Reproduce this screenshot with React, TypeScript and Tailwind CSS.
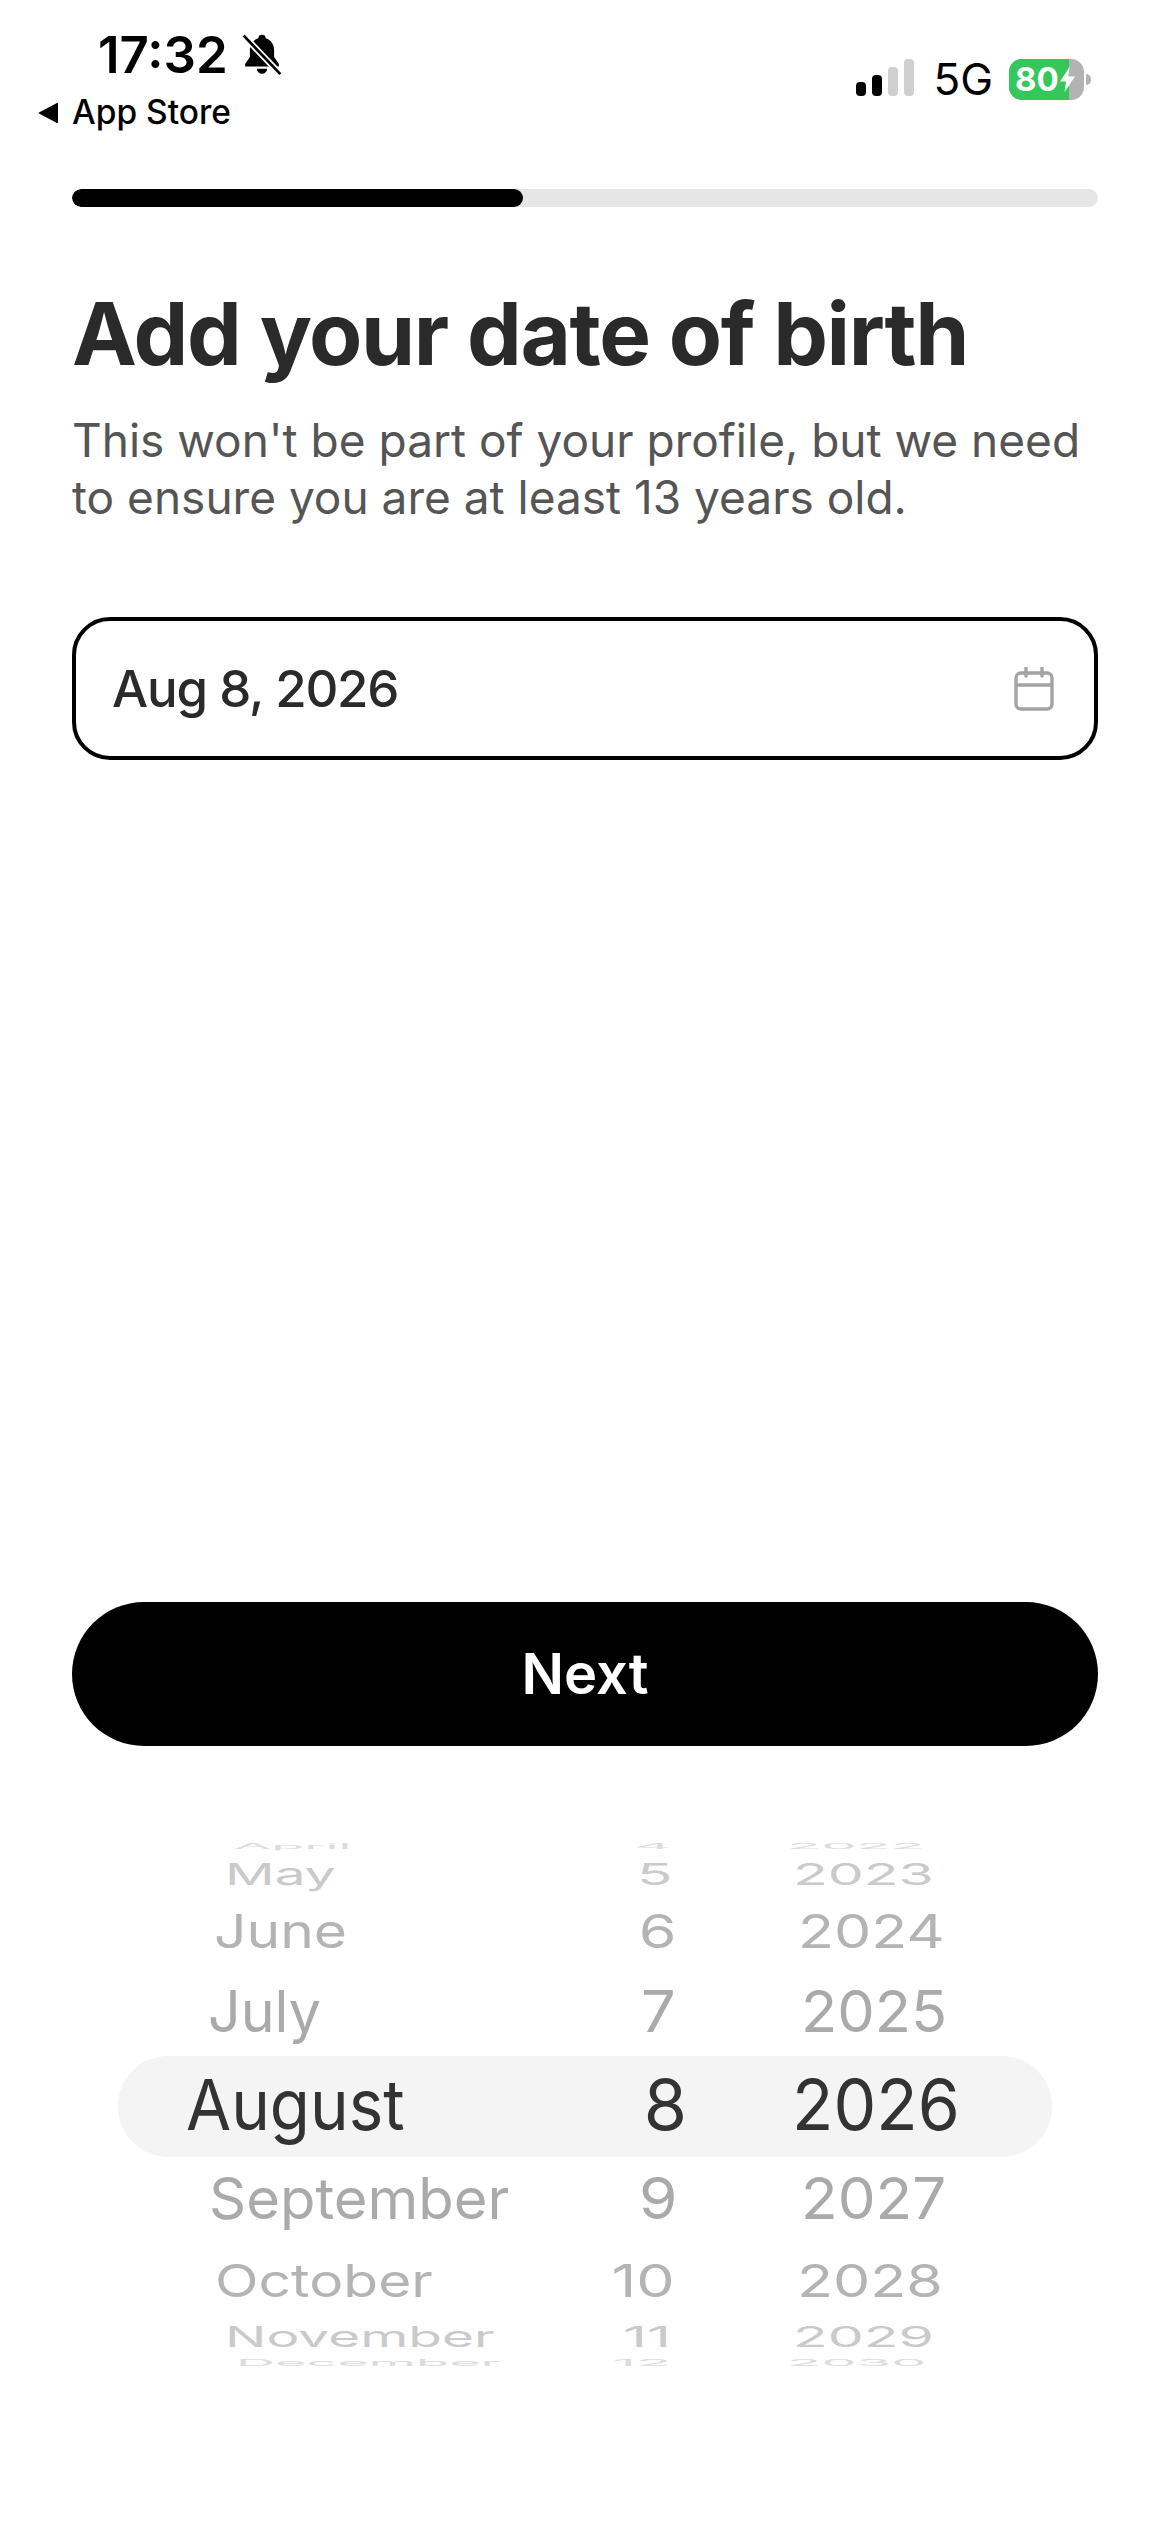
const ROWS = [
  { month: "April", day: "4", year: "2022", row: "h-[14px] text-[#dcdcdc]", tf: "[transform:scale(0.825,0.1)]", mc: "pl-[116px]", dc: "pr-[17px]", yc: "pl-[99px]" },
  { month: "May", day: "5", year: "2023", row: "h-[43px] text-[#cacaca]", tf: "[transform:scale(0.84,0.43)]", mc: "pl-[107px]", dc: "pr-[15px]", yc: "pl-[105px]" },
  { month: "June", day: "6", year: "2024", row: "h-[71px] text-[#b4b4b4]", tf: "[transform:scale(0.87,0.67)]", mc: "pl-[96px]", dc: "pr-[12px]", yc: "pl-[110px]" },
  { month: "July", day: "7", year: "2025", row: "h-[88px] text-[#aaaaaa]", tf: "[transform:scale(0.875,0.82)]", mc: "pl-[90px]", dc: "pr-[12px]", yc: "pl-[113px]" },
  { month: "August", day: "8", year: "2026", row: "h-[101px] text-[#333333] bg-[#f4f4f4] rounded-[50px]", tf: "", mc: "pl-[68px]", dc: "pr-[1px]", yc: "pl-[104px]" },
  { month: "September", day: "9", year: "2027", row: "h-[85px] text-[#aaaaaa]", tf: "[transform:scale(0.885,0.82)]", mc: "pl-[91px]", dc: "pr-[11px]", yc: "pl-[113px]" },
  { month: "October", day: "10", year: "2028", row: "h-[80px] text-[#b4b4b4]", tf: "[transform:scale(0.87,0.65)]", mc: "pl-[97px]", dc: "pr-[13px]", yc: "pl-[109px]" },
  { month: "November", day: "11", year: "2029", row: "h-[32px] text-[#cacaca]", tf: "[transform:scale(0.84,0.41)]", mc: "pl-[107px]", dc: "pr-[17px]", yc: "pl-[105px]" },
  { month: "December", day: "12", year: "2030", row: "h-[20px] text-[#dcdcdc]", tf: "[transform:scale(0.825,0.12)]", mc: "pl-[118px]", dc: "pr-[17px]", yc: "pl-[99px]" },
];

function StatusBar() {
  return (
    <div className="flex h-[189px] items-start justify-between">
      <div className="pl-[38px] pt-[28px]">
        <div className="ml-[60px] flex h-[52px] items-center gap-[12px]">
          <span className="text-[51px] font-semibold leading-none text-black">17:32</span>
          <svg viewBox="0 0 24 24" className="h-[46px] w-[44px]">
            <path
              d="M12 1.5a2 2 0 0 0-2 1.9C7 4.4 5.4 6.8 5.4 10v3.6L2.8 17.4v1.4h18.4v-1.4l-2.6-3.8V10c0-3.2-1.6-5.6-4.6-6.6a2 2 0 0 0-2-1.9zM9.2 20a2.8 2.8 0 0 0 5.6 0z"
              fill="#000"
            />
            <path d="M2.5 2.5 21.5 22.5" stroke="#fff" strokeWidth="3.4" />
            <path d="M2 2 22 23" stroke="#000" strokeWidth="1.5" />
          </svg>
        </div>
        <div className="mt-[15px] flex h-[36px] items-center gap-[13px]">
          <svg viewBox="0 0 21 20" className="h-[20px] w-[21px]">
            <path d="M20 1v18a1 1 0 0 1-1.5.8L1 10.6a.7.7 0 0 1 0-1.2L18.5.2A1 1 0 0 1 20 1z" fill="#000" />
          </svg>
          <span className="text-[33.5px] font-medium leading-none text-black">App Store</span>
        </div>
      </div>
      <div className="flex items-start pr-[79px] pt-[59px]">
        <div className="flex h-[37px] items-end gap-[6px]">
          <div className="h-[14px] w-[10px] rounded-[4px] bg-black" />
          <div className="h-[21px] w-[10px] rounded-[4px] bg-black" />
          <div className="h-[29px] w-[10px] rounded-[4px] bg-[#cfcfcf]" />
          <div className="h-[37px] w-[10px] rounded-[4px] bg-[#cfcfcf]" />
        </div>
        <span className="ml-[19px] h-[41px] text-[44px] font-normal leading-[41px] text-black">5G</span>
        <div className="ml-[16px] flex items-center">
          <div className="relative flex h-[41px] w-[75px] items-center overflow-hidden rounded-[13px] bg-[#b3b3b3]">
            <div className="h-full w-[60px] bg-[#34c759]" />
            <div className="absolute inset-0 flex items-center pl-[6px]">
              <span className="text-[33px] font-bold leading-none text-white">80</span>
              <svg viewBox="0 0 15 25" className="ml-[1px] h-[25px] w-[15px]">
                <path d="M9.5 0 0 14.5h6L4.5 25 15 9.5H8.5z" fill="#fff" />
              </svg>
            </div>
          </div>
          <div className="ml-[2px] h-[11px] w-[5px] rounded-r-full bg-[#b3b3b3]" />
        </div>
      </div>
    </div>
  );
}

function CalendarIcon() {
  return (
    <svg viewBox="0 0 40 44" className="h-[44px] w-[40px]" fill="none" stroke="#a3a3a3" strokeWidth="3.4">
      <rect x="2" y="6" width="36" height="36" rx="5" />
      <path d="M2 18H38" />
      <path d="M12 1V9" strokeLinecap="round" />
      <path d="M28 1V9" strokeLinecap="round" />
    </svg>
  );
}

function Wheel() {
  return (
    <div className="mt-[94px] overflow-hidden px-[118px] text-[70px] font-normal leading-none">
      {ROWS.map((r) => (
        <div key={r.month} className={`flex items-center pb-[3px] ${r.row}`}>
          <div className={`w-[450px] shrink-0 ${r.mc}`}>
            <span className={`inline-block origin-left whitespace-nowrap ${r.tf}`}>
              <span className="inline-block origin-left [transform:scaleX(0.935)]">{r.month}</span>
            </span>
          </div>
          <div className={`w-[120px] shrink-0 text-right ${r.dc}`}>
            <span className={`inline-block origin-right ${r.tf}`}>{r.day}</span>
          </div>
          <div className={`shrink-0 ${r.yc}`}>
            <span className={`inline-block origin-left ${r.tf}`}>
              <span className="inline-block origin-left [transform:scaleX(0.97)]">{r.year}</span>
            </span>
          </div>
        </div>
      ))}
    </div>
  );
}

export default function App() {
  return (
    <div className="flex h-[2532px] w-[1170px] flex-col overflow-hidden bg-white font-['Inter',sans-serif]">
      <StatusBar />
      <div className="px-[72px]">
        <div className="h-[18px] overflow-hidden rounded-full bg-[#e6e6e6]">
          <div className="h-full w-[451px] rounded-full bg-black" />
        </div>
        <h1 className="mt-[75px] text-[87px] font-bold leading-[104px] tracking-[-1.4px] text-[#2a2a2a]">
          Add your date of birth
        </h1>
        <p className="mt-[26px] text-[46px] leading-[57px] text-[#555555]">
          This won't be part of your profile, but we need
          <br />
          to ensure you are at least 13 years old.
        </p>
        <div className="mt-[91px] flex h-[143px] items-center justify-between rounded-[38px] border-[4px] border-black pl-[36px] pr-[40px]">
          <span className="text-[51px] font-[450] leading-none tracking-[-1.2px] text-[#2a2a2a]">Aug 8, 2026</span>
          <CalendarIcon />
        </div>
        <button
          type="button"
          className="mt-[842px] flex h-[144px] w-full items-center justify-center rounded-full bg-black text-[56px] font-semibold text-white"
        >
          Next
        </button>
      </div>
      <Wheel />
    </div>
  );
}
